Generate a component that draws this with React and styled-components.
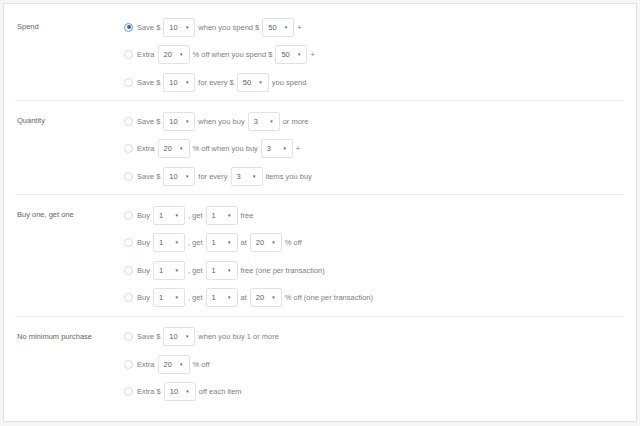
import React from "react";
import styled, { createGlobalStyle } from "styled-components";

const GlobalStyle = createGlobalStyle`
    html, body {
        margin: 0;
        padding: 0;
        background: #f6f6f6;
        font-family: "Liberation Sans", Arial, sans-serif;
    }
`;

const sections = [
    {
        label: "Spend",
        rows: [
            { checked: true, parts: ["Save $", "10", "when you spend $", "50", "+"] },
            { parts: ["Extra", "20", "% off when you spend $", "50", "+"] },
            { parts: ["Save $", "10", "for every $", "50", "you spend"] },
        ],
    },
    {
        label: "Quantity",
        rows: [
            { parts: ["Save $", "10", "when you buy", "3", "or more"] },
            { parts: ["Extra", "20", "% off when you buy", "3", "+"] },
            { parts: ["Save $", "10", "for every", "3", "items you buy"] },
        ],
    },
    {
        label: "Buy one, get one",
        rows: [
            { parts: ["Buy", "1", ", get", "1", "free"] },
            { parts: ["Buy", "1", ", get", "1", "at", "20", "% off"] },
            { parts: ["Buy", "1", ", get", "1", "free (one per transaction)"] },
            { parts: ["Buy", "1", ", get", "1", "at", "20", "% off (one per transaction)"] },
        ],
    },
    {
        label: "No minimum purchase",
        last: true,
        rows: [
            { parts: ["Save $", "10", "when you buy 1 or more"] },
            { parts: ["Extra", "20", "% off"] },
            { parts: ["Extra $", "10", "off each item"] },
        ],
    },
];

function App() {
    return (
        <>
            <GlobalStyle />
            <Page>
                <Card>
                    {sections.map((s) => (
                        <Section key={s.label} $last={s.last}>
                            <Label>{s.label}</Label>
                            <Rows>
                                {s.rows.map((r, i) => (
                                    <Row key={i}>
                                        <Radio $checked={r.checked} />
                                        {r.parts.map((p, j) =>
                                            j % 2 === 1 ? (
                                                <Select key={j}>
                                                    <span>{p}</span>
                                                    <Caret>▼</Caret>
                                                </Select>
                                            ) : (
                                                <Text key={j}>{p}</Text>
                                            )
                                        )}
                                    </Row>
                                ))}
                            </Rows>
                        </Section>
                    ))}
                </Card>
            </Page>
        </>
    );
}

export default App;

const Page = styled.div`
    width: 640px;
    height: 426px;
    padding: 3px 3px 4px 3px;
    box-sizing: border-box;
`;

const Card = styled.div`
    background: #fff;
    border: 1px solid #e2e2e2;
    height: 100%;
    box-sizing: border-box;
    padding: 0 12px 0 11px;
`;

const Section = styled.div`
    display: flex;
    padding: ${(p) => (p.$last ? "10px 0 0" : "10px 0 8px")};
    border-bottom: ${(p) => (p.$last ? "none" : "1px solid #ececec")};
    &:first-child {
        padding-top: 13px;
    }
`;

const Label = styled.div`
    width: 109px;
    padding-left: 2px;
    box-sizing: border-box;
    font-size: 7.5px;
    color: #666;
    line-height: 20px;
    flex-shrink: 0;
`;

const Rows = styled.div`
    display: flex;
    flex-direction: column;
    gap: 7.5px;
`;

const Row = styled.div`
    display: flex;
    align-items: center;
    height: 20px;
    font-size: 7.5px;
    color: #808080;
`;

const Radio = styled.span`
    width: 9px;
    height: 9px;
    border-radius: 50%;
    border: 1px solid ${(p) => (p.$checked ? "#6b93dc" : "#dadada")};
    margin-right: 4px;
    position: relative;
    box-sizing: border-box;
    background: #fff;
    &::after {
        content: "";
        display: ${(p) => (p.$checked ? "block" : "none")};
        position: absolute;
        left: 1.5px;
        top: 1.5px;
        width: 4px;
        height: 4px;
        border-radius: 50%;
        background: #3a66c0;
    }
`;

const Text = styled.span`
    white-space: nowrap;
`;

const Select = styled.div`
    width: 32px;
    height: 19px;
    margin: 0 3px;
    box-sizing: border-box;
    border: 1px solid #e3e3e3;
    border-radius: 2px;
    display: flex;
    align-items: center;
    justify-content: space-between;
    padding: 0 5px 0 5px;
    color: #606060;
    background: #fff;
`;

const Caret = styled.span`
    font-size: 4.5px;
    color: #666;
`;
